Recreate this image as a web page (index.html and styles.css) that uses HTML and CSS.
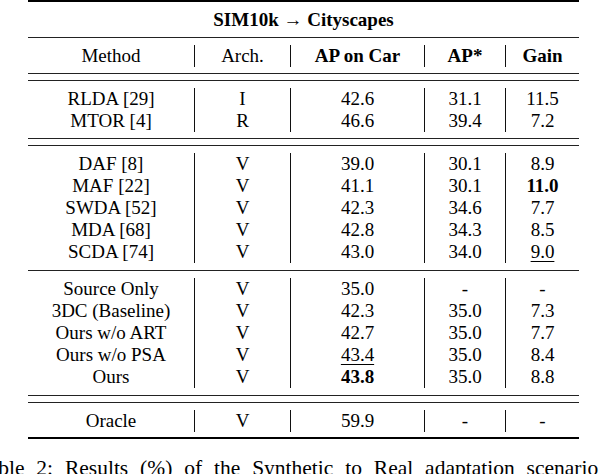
FILE: index.html
```html
<!DOCTYPE html>
<html lang="en">
<head>
<meta charset="utf-8">
<title>SIM10k to Cityscapes</title>
<link rel="stylesheet" href="styles.css">
</head>
<body>
<div class="page">
  <div class="tbl">
    <div class="rule thick"></div>
    <div class="title">SIM10k &rarr; Cityscapes</div>
    <div class="rule thin"></div>

    <div class="group g-head">
      <div class="row">
        <div class="c">Method</div><div class="c">Arch.</div><div class="c b">AP on Car</div><div class="c b">AP*</div><div class="c b">Gain</div>
      </div>
    </div>
    <div class="rule double"></div>

    <div class="group g2">
      <div class="row"><div class="c">RLDA [29]</div><div class="c">I</div><div class="c">42.6</div><div class="c">31.1</div><div class="c">11.5</div></div>
      <div class="row"><div class="c">MTOR [4]</div><div class="c">R</div><div class="c">46.6</div><div class="c">39.4</div><div class="c">7.2</div></div>
    </div>
    <div class="rule double"></div>

    <div class="group g5">
      <div class="row"><div class="c">DAF [8]</div><div class="c">V</div><div class="c">39.0</div><div class="c">30.1</div><div class="c">8.9</div></div>
      <div class="row"><div class="c">MAF [22]</div><div class="c">V</div><div class="c">41.1</div><div class="c">30.1</div><div class="c b">11.0</div></div>
      <div class="row"><div class="c">SWDA [52]</div><div class="c">V</div><div class="c">42.3</div><div class="c">34.6</div><div class="c">7.7</div></div>
      <div class="row"><div class="c">MDA [68]</div><div class="c">V</div><div class="c">42.8</div><div class="c">34.3</div><div class="c">8.5</div></div>
      <div class="row"><div class="c">SCDA [74]</div><div class="c">V</div><div class="c">43.0</div><div class="c">34.0</div><div class="c"><span class="u">9.0</span></div></div>
    </div>
    <div class="rule thin"></div>

    <div class="group g5">
      <div class="row"><div class="c">Source Only</div><div class="c">V</div><div class="c">35.0</div><div class="c">-</div><div class="c">-</div></div>
      <div class="row"><div class="c">3DC (Baseline)</div><div class="c">V</div><div class="c">42.3</div><div class="c">35.0</div><div class="c">7.3</div></div>
      <div class="row"><div class="c">Ours w/o ART</div><div class="c">V</div><div class="c">42.7</div><div class="c">35.0</div><div class="c">7.7</div></div>
      <div class="row"><div class="c">Ours w/o PSA</div><div class="c">V</div><div class="c"><span class="u">43.4</span></div><div class="c">35.0</div><div class="c">8.4</div></div>
      <div class="row"><div class="c">Ours</div><div class="c">V</div><div class="c b">43.8</div><div class="c">35.0</div><div class="c">8.8</div></div>
    </div>
    <div class="rule double"></div>

    <div class="group g1">
      <div class="row"><div class="c">Oracle</div><div class="c">V</div><div class="c">59.9</div><div class="c">-</div><div class="c">-</div></div>
    </div>
    <div class="rule thick"></div>
  </div>
  <p class="caption">Table 2: Results (%) of the Synthetic to Real adaptation scenario</p>
</div>
</body>
</html>
```

FILE: styles.css
```css
html, body {
  margin: 0;
  padding: 0;
  background: #fff;
}
body {
  width: 612px;
  height: 474px;
  overflow: hidden;
  font-family: "Liberation Serif", "Times New Roman", serif;
  font-size: 19px;
  color: #000;
}
.page {
  padding-left: 28px;
}
.tbl {
  width: 551px;
}
.rule.thick {
  height: 2px;
  background: #000;
}
.rule.thin {
  height: 1px;
  background: #222;
}
.rule.double {
  height: 6px;
  border-top: 1px solid #222;
  border-bottom: 1px solid #222;
}
.title {
  height: 35px;
  line-height: 35px;
  text-align: center;
  font-weight: bold;
}
.group {
  padding-top: 7px;
  padding-bottom: 6px;
}
.group.g5 {
  padding-bottom: 7px;
}
.group.g1 {
  padding-bottom: 5px;
}
.row {
  display: grid;
  grid-template-columns: 166px 96px 134px 81px 74px;
  height: 22px;
}
.c {
  line-height: 22px;
  text-align: center;
  white-space: nowrap;
}
.c + .c {
  border-left: 1px solid #111;
}
.b {
  font-weight: bold;
}
.u {
  text-decoration: underline;
  text-decoration-thickness: 1px;
  text-underline-offset: 3px;
}
.caption {
  margin: 17px 0 0 -51px;
  font-size: 21.5px;
  line-height: 24px;
  white-space: nowrap;
  word-spacing: 6.5px;
}
```
